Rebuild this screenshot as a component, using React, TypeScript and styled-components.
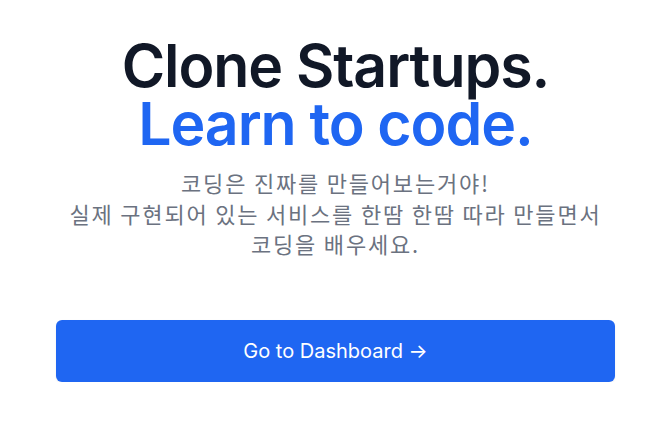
import React from "react";
import styled, { createGlobalStyle } from "styled-components";

const Global = createGlobalStyle`
  html, body { margin: 0; padding: 0; background: #ffffff; }
  body { font-family: Inter, "Noto Sans CJK KR", sans-serif; }
`;

const Page = styled.main`
  display: flex;
  flex-direction: column;
  align-items: center;
  padding: 37px 56px 0;
`;

const Title = styled.h1`
  margin: 0;
  font-family: Inter, "Noto Sans CJK KR", sans-serif;
  font-size: 59px;
  line-height: 58px;
  font-weight: 600;
  letter-spacing: -0.018em;
  text-align: center;
  color: #111827;
`;

const Accent = styled.span`
  display: block;
  color: #1f66f2;
`;

const Lead = styled.p`
  margin: 14px 0 0;
  font-family: "Noto Sans CJK KR", sans-serif;
  font-size: 22px;
  line-height: 30.5px;
  letter-spacing: 1.8px;
  text-align: center;
  color: #6b7280;
`;

const Cta = styled.a`
  display: flex;
  align-items: center;
  justify-content: center;
  align-self: stretch;
  margin-top: 61px;
  height: 62px;
  border-radius: 6px;
  background: #1f66f2;
  color: #ffffff;
  font-family: Inter, sans-serif;
  font-size: 20px;
  text-decoration: none;
  box-shadow: 0 1px 2px rgba(0, 0, 0, 0.08);
`;

export default function App() {
  return (
    <>
      <Global />
      <Page>
        <Title>
          Clone Startups.
          <Accent>Learn to code.</Accent>
        </Title>
        <Lead>
          코딩은 진짜를 만들어보는거야!
          <br />
          실제 구현되어 있는 서비스를 한땀 한땀 따라 만들면서
          <br />
          코딩을 배우세요.
        </Lead>
        <Cta href="#">Go to Dashboard →</Cta>
      </Page>
    </>
  );
}
